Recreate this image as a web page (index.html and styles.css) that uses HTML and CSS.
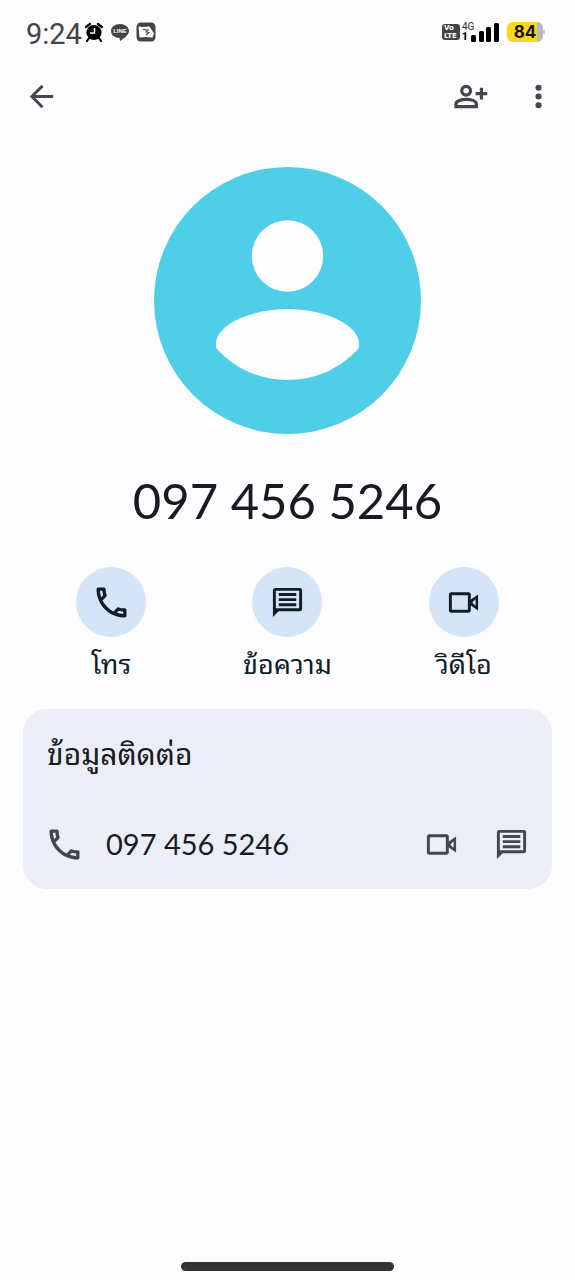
FILE: index.html
```html
<!DOCTYPE html>
<html lang="th">
<head>
<meta charset="utf-8">
<meta name="viewport" content="width=device-width, initial-scale=1">
<title>097 456 5246</title>
<link rel="stylesheet" href="styles.css">
</head>
<body>
<svg class="sprite" aria-hidden="true">
  <symbol id="call" viewBox="1.500 1.500 21 21"><path d="M6.540 5c.06.89.21 1.760.45 2.590l-1.200 1.200c-.41-1.200-.67-2.470-.76-3.790h1.510m9.860 12.020c.85.24 1.720.39 2.600.45v1.490c-1.320-.09-2.590-.35-3.800-.75l1.200-1.190M7.500 3H4c-.55 0-1 .45-1 1 0 9.390 7.610 17 17 17 .55 0 1-.45 1-1v-3.490c0-.55-.45-1-1-1-1.240 0-2.450-.2-3.570-.57-.1-.04-.21-.05-.31-.05-.26 0-.51.1-.71.29l-2.200 2.200c-2.830-1.450-5.150-3.760-6.590-6.590l2.200-2.200c.28-.28.36-.67.25-1.020C8.700 6.450 8.500 5.250 8.500 4c0-.55-.45-1-1-1z"/></symbol>
  <symbol id="message" viewBox="0 0 24 24"><path fill-rule="evenodd" d="M3.500 2h17c.8 0 1.500.7 1.500 1.500v13c0 .8-.7 1.500-1.500 1.500H6l-4 4V3.500C2 2.700 2.700 2 3.500 2zM4 4v12h16V4z"/><path d="M6 5.500h12v2H6zM6 9h12v2H6zM6 12.500h12v2H6z"/></symbol>
  <symbol id="video" viewBox="0 0 24 24"><path fill-rule="evenodd" d="M3.500 5h12c.8 0 1.500.7 1.500 1.500V10l5-3.500v11L17 14v3.500c0 .8-.7 1.500-1.500 1.500h-12c-.8 0-1.500-.7-1.500-1.500v-11C2 5.700 2.700 5 3.500 5zM4 7v10h11V7zM20.300 9.800L18 12l2.300 2.200z"/></symbol>
</svg>

<div class="status">
  <div class="status-side">
    <time class="clock">9:24</time>
    <svg class="status-icon" viewBox="0 0 20 20" aria-label="Alarm"><circle cx="10" cy="10.500" r="7.600"/><path d="M2 5l4-3M18 5l-4-3M5 16l-2 3M15 16l2 3" stroke="#000" stroke-width="2.200" stroke-linecap="round"/><path d="M10.500 6v5H6" fill="none" stroke="#fff" stroke-width="1.500"/></svg>
    <svg class="status-icon" viewBox="0 0 20 20" aria-label="LINE"><path fill="#444" d="M10 2c5 0 9 3 9 7 0 3-3 5.500-5.500 7.500L10 19l-.5-3C4.500 16 1 13 1 9s4-7 9-7z"/><text x="10" y="11" class="line-text">LINE</text></svg>
    <svg class="status-icon" viewBox="0 0 20 20" aria-label="App"><rect x=".5" y=".5" width="19" height="19" rx="4.500" fill="#444"/><path fill="#fff" d="M2.500 4.500l4 .5 7-.5 4.500 7-1.500 4-7-.5-6 .5z"/><path d="M7 7.500l5 .5-2 2 3 .5-3 2.500" fill="none" stroke="#444" stroke-width="1.100"/></svg>
  </div>
  <div class="status-side status-right">
    <span class="volte"><span>Vo</span><span>LTE</span></span>
    <span class="network"><span>4G</span><b>1</b></span>
    <svg class="signal" viewBox="0 0 28 19" aria-label="Signal"><rect x="0" y="12" width="5" height="7" rx="1.500"/><rect x="8" y="8" width="5" height="11" rx="1.500"/><rect x="15" y="4" width="5" height="15" rx="1.500"/><rect x="23" y="0" width="5" height="19" rx="1.500"/></svg>
    <span class="battery">84</span>
  </div>
</div>

<header class="appbar">
  <button class="icon-button" aria-label="Back"><svg class="icon" viewBox="0 0 24 24"><path d="M20 11H7.800l5.600-5.600L12 4l-8 8 8 8 1.400-1.400L7.800 13H20z"/></svg></button>
  <div class="appbar-actions">
    <button class="icon-button" aria-label="Add contact"><svg class="icon" viewBox="0 0 24 24"><g fill="none" stroke="currentColor" stroke-width="2.200"><circle cx="9" cy="8" r="3"/><path d="M2 19v-1.800C2 14.800 6 14 9 14s7 .8 7 3.200V19z"/><path d="M19.500 6v8M15.500 10h8"/></g></svg></button>
    <button class="icon-button" aria-label="More options"><svg class="icon" viewBox="0 0 24 24"><circle cx="12" cy="6" r="2.100"/><circle cx="12" cy="12" r="2.100"/><circle cx="12" cy="18" r="2.100"/></svg></button>
  </div>
</header>

<main class="contact">
  <svg class="avatar" viewBox="0 0 267 267" aria-label="Contact picture"><circle cx="133.500" cy="133.500" r="133.500" fill="#4fcfe7"/><g fill="#fdfcff"><circle cx="133.500" cy="89" r="35.700"/><path d="M62 177C62 157 98 142 133.500 142S205 157 205 177v4c-19 21-44 32-71.500 32S81 202 62 181z"/></g></svg>
  <h1 class="number">097 456 5246</h1>
  <div class="actions">
    <button class="action"><span class="action-circle"><svg class="icon"><use href="#call"/></svg></span><span>โทร</span></button>
    <button class="action"><span class="action-circle"><svg class="icon"><use href="#message"/></svg></span><span>ข้อความ</span></button>
    <button class="action"><span class="action-circle"><svg class="icon"><use href="#video"/></svg></span><span>วิดีโอ</span></button>
  </div>
  <section class="card">
    <h2 class="card-title">ข้อมูลติดต่อ</h2>
    <div class="card-row">
      <svg class="icon" aria-hidden="true"><use href="#call"/></svg>
      <a class="card-number" href="tel:0974565246">097 456 5246</a>
      <button class="icon-button" aria-label="วิดีโอ"><svg class="icon"><use href="#video"/></svg></button>
      <button class="icon-button" aria-label="ข้อความ"><svg class="icon"><use href="#message"/></svg></button>
    </div>
  </section>
</main>
<div class="home-bar"></div>
</body>
</html>
```
FILE: styles.css
```css
* { box-sizing: border-box; }
body {
  margin: 0;
  min-height: 100vh;
  display: flex;
  flex-direction: column;
  background: #fdfcff;
  color: #1b1b1f;
  font-family: "Noto Sans Thai Looped", "Noto Looped Thai", Loma, Garuda, Waree, Umpush, "Noto Sans Thai", "Noto Sans", sans-serif;
}
button {
  margin: 0;
  padding: 0;
  border: 0;
  background: none;
  color: inherit;
  font: inherit;
}
.sprite { display: none; }
.icon { display: block; width: 35px; height: 35px; fill: currentColor; flex: none; }

.status {
  display: flex;
  justify-content: space-between;
  align-items: center;
  height: 64px;
  padding: 0 32px 0 26px;
}
.status-side { display: flex; align-items: center; gap: 2px; }
.clock { font: 29px/32px Roboto, sans-serif; color: #444; padding-top: 4px; }
.status-icon { width: 20px; height: 20px; }
.status-icon + .status-icon { margin-left: 4px; }
.line-text { font: bold 6px "Liberation Sans", sans-serif; fill: #fff; text-anchor: middle; }
.volte {
  display: flex;
  flex-direction: column;
  width: 18px;
  height: 16px;
  padding-left: 2px;
  border-radius: 3px;
  background: #444;
  color: #fff;
  font: bold 7px/8px "DejaVu Sans", sans-serif;
}
.network { display: flex; flex-direction: column; width: 14px; font: 10px/10px Roboto, sans-serif; color: #333; }
.network b { color: #000; font-weight: 900; }
.signal { width: 28px; height: 19px; margin-left: -7px; }
.battery {
  position: relative;
  width: 36px;
  height: 20px;
  margin-left: 6px;
  border-radius: 6px;
  background: linear-gradient(90deg, #fad717 84%, #bbb 84%);
  color: #111;
  font: bold 17px/20px Inter, sans-serif;
  text-align: center;
}
.battery::after {
  content: "";
  position: absolute;
  left: 100%;
  top: 8px;
  width: 2px;
  height: 4px;
  background: #ccc;
}

.appbar {
  display: flex;
  justify-content: space-between;
  align-items: center;
  height: 65px;
  padding: 0 19px 0 24px;
  color: #44464e;
}
.appbar-actions { display: flex; gap: 33px; }

.contact { display: flex; flex-direction: column; padding: 38px 23px 0; }
.avatar { width: 267px; height: 267px; align-self: center; }
.number {
  margin: 36px 0 37px;
  font: 49px/60px Lato, sans-serif;
  text-align: center;
}
.actions { display: grid; grid-template-columns: repeat(3, 1fr); }
.action {
  display: flex;
  flex-direction: column;
  align-items: center;
  gap: 5px;
  color: #0f1d2a;
  font-size: 27px;
  line-height: 40px;
}
.action-circle {
  display: grid;
  place-items: center;
  width: 70px;
  height: 70px;
  border-radius: 50%;
  background: #d6e4f7;
}
.card {
  margin-top: 27px;
  padding: 21px 23px 27px 24px;
  border-radius: 24px;
  background: #ebeef6;
}
.card-title { margin: 0 0 52px; font-size: 30px; font-weight: 400; line-height: 44px; }
.card-row { display: flex; align-items: center; height: 36px; color: #44464e; }
.card-number {
  flex: 1;
  margin-left: 24px;
  color: #1b1b1f;
  font: 29px/36px Lato, sans-serif;
  text-decoration: none;
}
.card-row .icon-button + .icon-button { margin-left: 35px; }

.home-bar {
  width: 37%;
  height: 9px;
  margin: auto auto 9px;
  border-radius: 5px;
  background: #333;
}
```
